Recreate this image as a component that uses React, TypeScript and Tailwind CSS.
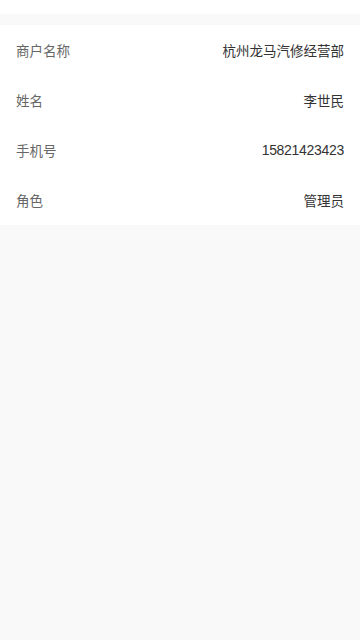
import React from 'react';

interface InfoRow {
  label: string;
  value: string;
  numeric?: boolean;
}

const rows: InfoRow[] = [
  { label: '商户名称', value: '杭州龙马汽修经营部' },
  { label: '姓名', value: '李世民' },
  { label: '手机号', value: '15821423423', numeric: true },
  { label: '角色', value: '管理员' },
];

const App: React.FC = () => {
  return (
    <div
      className="min-h-[640px] bg-[#f9f9f9]"
      style={{ fontFamily: '"Noto Sans CJK SC", sans-serif' }}
    >
      <div className="h-[14px] bg-white" />
      <div className="h-[11px]" />
      <div className="bg-white">
        {rows.map(row => (
          <div key={row.label} className="flex h-[50px] items-center justify-between px-4 text-[13.5px] leading-5">
            <span className="text-[#666666]">{row.label}</span>
            {row.numeric ? (
              <span
                className="text-[14px] tracking-[-0.3px] text-[#333333]"
                style={{ fontFamily: '"Liberation Sans", sans-serif' }}
              >
                {row.value}
              </span>
            ) : (
              <span className="text-[#333333]">{row.value}</span>
            )}
          </div>
        ))}
      </div>
    </div>
  );
};

export default App;
